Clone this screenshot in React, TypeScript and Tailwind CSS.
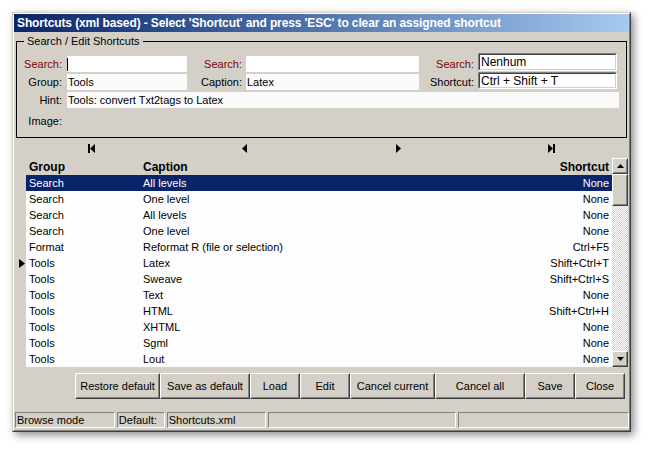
import React from "react";

const rows: [string, string, string][] = [
  ["Search", "All levels", "None"],
  ["Search", "One level", "None"],
  ["Search", "All levels", "None"],
  ["Search", "One level", "None"],
  ["Format", "Reformat R (file or selection)", "Ctrl+F5"],
  ["Tools", "Latex", "Shift+Ctrl+T"],
  ["Tools", "Sweave", "Shift+Ctrl+S"],
  ["Tools", "Text", "None"],
  ["Tools", "HTML", "Shift+Ctrl+H"],
  ["Tools", "XHTML", "None"],
  ["Tools", "Sgml", "None"],
  ["Tools", "Lout", "None"],
];

function Raised({ className, children }: { className: string; children?: React.ReactNode }) {
  return (
    <div className={`${className} border border-t-white border-l-white border-r-[#404040] border-b-[#404040]`}>
      <div className="h-full border border-t-transparent border-l-transparent border-r-[#808080] border-b-[#808080] flex items-center justify-center">
        {children}
      </div>
    </div>
  );
}

function Btn({ label, w }: { label: string; w: string }) {
  return <Raised className={`${w} h-[26px] text-[11px]`}>{label}</Raised>;
}

function Sunken({ className, children }: { className: string; children?: React.ReactNode }) {
  return (
    <div className={`${className} border border-t-[#808080] border-l-[#808080] border-r-white border-b-white`}>
      <div className="h-full border border-t-[#404040] border-l-[#404040] border-r-[#d4d0c8] border-b-[#d4d0c8] bg-white pl-[1px] flex items-center leading-none">
        {children}
      </div>
    </div>
  );
}

function Status({ className, children }: { className: string; children?: React.ReactNode }) {
  return (
    <div className={`${className} h-[16px] border border-t-[#808080] border-l-[#808080] border-r-white border-b-white pl-[1px] flex items-center text-[11px] leading-none`}>
      {children}
    </div>
  );
}

function Tri({ dir }: { dir: "first" | "prior" | "next" | "last" }) {
  return (
    <svg width="10" height="9" viewBox="0 0 10 9">
      {dir === "first" && (
        <>
          <rect x="1" y="0" width="2" height="9" fill="#000" />
          <path d="M3 4.5 L8 0 L8 9 Z" fill="#000" />
        </>
      )}
      {dir === "prior" && <path d="M2 4.5 L7 0 L7 9 Z" fill="#000" />}
      {dir === "next" && <path d="M3 0 L8 4.5 L3 9 Z" fill="#000" />}
      {dir === "last" && (
        <>
          <path d="M2 0 L7 4.5 L2 9 Z" fill="#000" />
          <rect x="7" y="0" width="2" height="9" fill="#000" />
        </>
      )}
    </svg>
  );
}

export default function App() {
  return (
    <div className="w-[651px] h-[452px] bg-white overflow-hidden pt-[12px] pl-[12px] font-['Liberation_Sans',Arial,sans-serif] text-black">
      <div className="w-[619px] h-[420px] bg-[#d4d0c8] border border-t-[#d4d0c8] border-l-[#d4d0c8] border-r-[#404040] border-b-[#404040] shadow-[3px_3px_8px_rgba(0,0,0,0.45)]">
        <div className="h-full border border-t-white border-l-white border-r-[#808080] border-b-[#808080] flex flex-col">
          {/* title bar */}
          <div className="h-[18px] bg-linear-to-r from-[#0a246a] to-[#a6caf0] flex items-center pl-[3px] text-white font-bold text-[12px] tracking-[-0.12px] whitespace-nowrap">
            Shortcuts (xml based) - Select 'Shortcut' and press 'ESC' to clear an assigned shortcut
          </div>

          {/* search / edit group */}
          <fieldset className="mx-[2px] mt-[3px] border border-black pb-[8px] min-w-0 text-[11px]">
            <legend className="ml-[7px] px-[3px] leading-[13px]">Search / Edit Shortcuts</legend>
            <div className="mt-[5px] flex h-[19px]">
              <div className="w-[45px] h-[16px] self-end flex items-center justify-end text-[#800000]">Search:</div>
              <div className="ml-[5px] w-[120px] h-[16px] self-end bg-white flex items-center">
                <div className="w-[1px] h-[13px] bg-black" />
              </div>
              <div className="w-[55px] h-[16px] self-end flex items-center justify-end text-[#800000]">Search:</div>
              <div className="ml-[4px] w-[173px] h-[16px] self-end bg-white" />
              <div className="w-[55px] h-[16px] self-end flex items-center justify-end text-[#800000]">Search:</div>
              <Sunken className="ml-[4px] w-[139px] h-[18px] self-start text-[12px]">Nenhum</Sunken>
            </div>
            <div className="flex h-[18px]">
              <div className="w-[45px] h-[16px] self-end flex items-center justify-end">Group:</div>
              <div className="ml-[5px] w-[120px] h-[16px] self-end bg-[#fafafa] pl-[1px] flex items-center">Tools</div>
              <div className="w-[55px] h-[16px] self-end flex items-center justify-end">Caption:</div>
              <div className="ml-[4px] w-[173px] h-[16px] self-end bg-[#fafafa] pl-[1px] flex items-center">Latex</div>
              <div className="w-[55px] h-[16px] self-end flex items-center justify-end">Shortcut:</div>
              <Sunken className="ml-[4px] w-[139px] h-[17px] self-start text-[12px]">Ctrl + Shift + T</Sunken>
            </div>
            <div className="mt-[2px] flex h-[16px]">
              <div className="w-[45px] flex items-center justify-end">Hint:</div>
              <div className="ml-[5px] w-[552px] bg-[#fafafa] pl-[1px] flex items-center">Tools: convert Txt2tags to Latex</div>
            </div>
            <div className="mt-[5px] flex h-[16px]">
              <div className="w-[45px] flex items-center justify-end">Image:</div>
            </div>
          </fieldset>

          {/* navigator */}
          <div className="mx-[2px] h-[20px] grid grid-cols-4">
            <div className="flex items-center justify-center"><Tri dir="first" /></div>
            <div className="flex items-center justify-center"><Tri dir="prior" /></div>
            <div className="flex items-center justify-center"><Tri dir="next" /></div>
            <div className="flex items-center justify-center"><Tri dir="last" /></div>
          </div>

          {/* grid */}
          <div className="mr-[1px] h-[209px] flex">
            <div className="flex-1 flex flex-col">
              <div className="h-[17px] flex items-center font-bold text-[12px]">
                <div className="w-[12px]" />
                <div className="w-[114px] pl-[3px]">Group</div>
                <div className="flex-1 pl-[3px]">Caption</div>
                <div className="pr-[3px]">Shortcut</div>
              </div>
              {rows.map(([g, c, s], i) => (
                <div key={i} className="h-[16px] flex text-[11px]">
                  <div className="w-[12px] flex items-center justify-end pr-[1px]">
                    {i === 5 && (
                      <svg width="6" height="9" viewBox="0 0 6 9">
                        <path d="M0 0 L6 4.5 L0 9 Z" fill="#000" />
                      </svg>
                    )}
                  </div>
                  <div className={`flex-1 flex items-center ${i === 0 ? "bg-[#0a246a] text-white" : "bg-[#fdfdfd]"}`}>
                    <div className="w-[114px] pl-[3px]">{g}</div>
                    <div className="flex-1 pl-[3px]">{c}</div>
                    <div className="pr-[3px]">{s}</div>
                  </div>
                </div>
              ))}
            </div>
            <div className="w-[16px] flex flex-col">
              <Raised className="h-[16px] bg-[#d4d0c8]">
                <svg width="7" height="4" viewBox="0 0 7 4"><path d="M3.5 0 L7 4 L0 4 Z" fill="#000" /></svg>
              </Raised>
              <Raised className="h-[32px] bg-[#d4d0c8]" />
              <div className="flex-1 bg-[repeating-conic-gradient(#d4d0c8_0_25%,#ffffff_0_50%)] bg-[length:2px_2px]" />
              <Raised className="h-[16px] bg-[#d4d0c8]">
                <svg width="7" height="4" viewBox="0 0 7 4"><path d="M0 0 L7 0 L3.5 4 Z" fill="#000" /></svg>
              </Raised>
            </div>
          </div>

          {/* buttons */}
          <div className="mt-[6px] flex justify-end pr-[4px]">
            <Btn label="Restore default" w="w-[85px]" />
            <Btn label="Save as default" w="w-[90px]" />
            <Btn label="Load" w="w-[50px]" />
            <Btn label="Edit" w="w-[50px]" />
            <Btn label="Cancel current" w="w-[85px]" />
            <Btn label="Cancel all" w="w-[90px]" />
            <Btn label="Save" w="w-[50px]" />
            <Btn label="Close" w="w-[50px]" />
          </div>

          {/* status bar */}
          <div className="mt-[13px] ml-[1px] flex">
            <Status className="w-[100px]">Browse mode</Status>
            <Status className="ml-[2px] w-[48px]">Default:</Status>
            <Status className="ml-[2px] w-[99px]">Shortcuts.xml</Status>
            <Status className="ml-[2px] w-[189px]" />
            <Status className="ml-[2px] w-[171px]" />
          </div>
        </div>
      </div>
    </div>
  );
}
